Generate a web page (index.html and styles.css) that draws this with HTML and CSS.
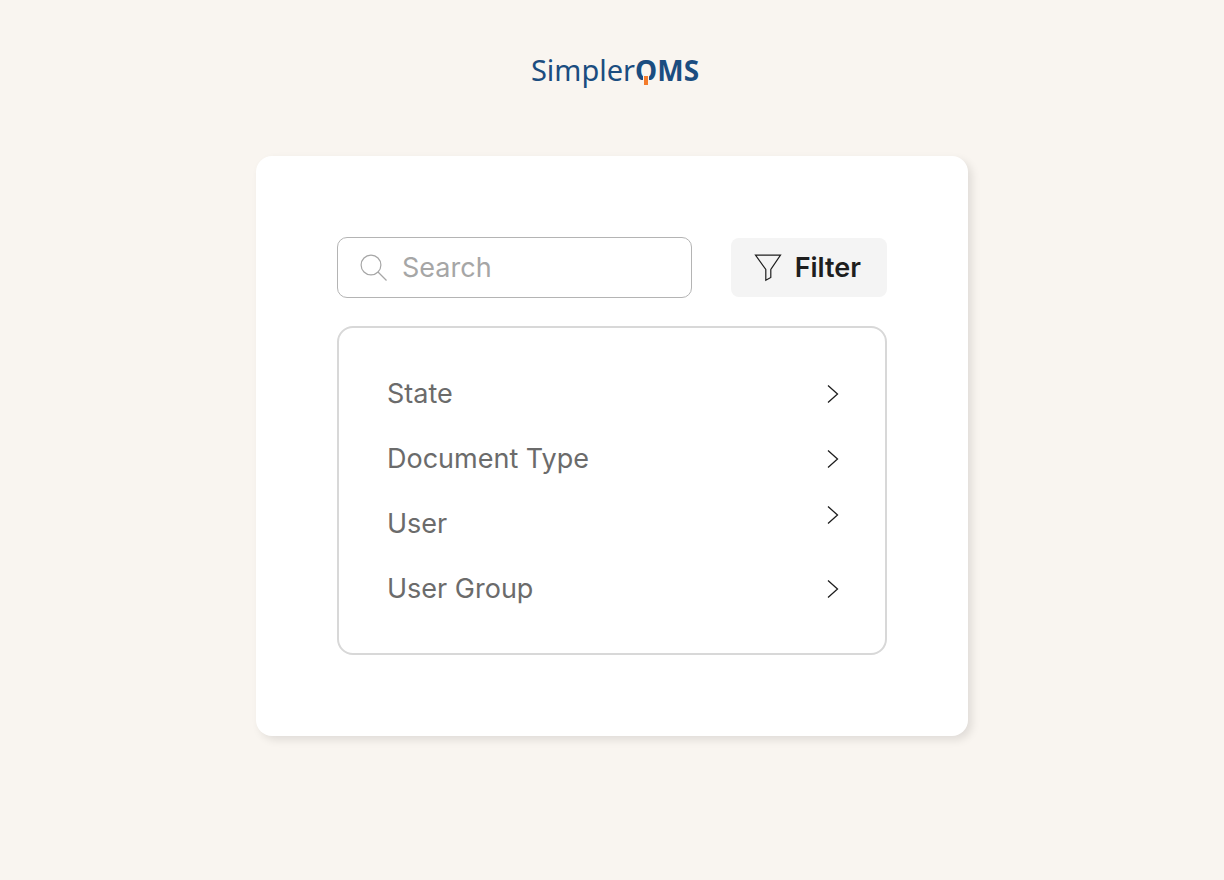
FILE: index.html
```html
<!DOCTYPE html>
<html lang="en">
<head>
	<meta charset="UTF-8">
	<meta name="viewport" content="width=device-width, initial-scale=1">
	<title>SimplerQMS</title>
	<link rel="stylesheet" href="styles.css">
</head>
<body>
	<header class="logo"><span class="simpler">Simpler</span><span class="qms"><span class="q"><span class="q-ring">Q</span></span>MS</span></header>
	<main class="card">
		<form class="toolbar">
			<label class="search">
				<svg class="search-icon" viewBox="0 0 28 28" aria-hidden="true">
					<circle cx="11" cy="11" r="9.9"/>
					<path d="M18 18L26.500 26.500"/>
				</svg>
				<input type="search" placeholder="Search" aria-label="Search">
			</label>
			<button type="button" class="filter">
				<svg class="filter-icon" viewBox="0 0 28 28" aria-hidden="true">
					<path d="M1.500 1.200H26.500L16.800 15.500V23.500L11.800 26.200V15.500Z"/>
				</svg>
				Filter
			</button>
		</form>
		<ul class="options">
			<li><button type="button">State<svg class="arrow" viewBox="0 0 12 18" aria-hidden="true"><path d="M1 0.500L10.500 9L1 17.500"/></svg></button></li>
			<li><button type="button">Document Type<svg class="arrow" viewBox="0 0 12 18" aria-hidden="true"><path d="M1 0.500L10.500 9L1 17.500"/></svg></button></li>
			<li><button type="button">User<svg class="arrow arrow-top" viewBox="0 0 12 18" aria-hidden="true"><path d="M1 0.500L10.500 9L1 17.500"/></svg></button></li>
			<li><button type="button">User Group<svg class="arrow" viewBox="0 0 12 18" aria-hidden="true"><path d="M1 0.500L10.500 9L1 17.500"/></svg></button></li>
		</ul>
	</main>
</body>
</html>
```
FILE: styles.css
```css
*{
	margin: 0;
	padding: 0;
	box-sizing: border-box;
	list-style: none;
}
body{
	background: #f9f5f0;
	font-family: Inter, "Liberation Sans", sans-serif;
	font-size: 27px;
	line-height: 36px;
	padding: 52px 24px;
}
button, input{
	font: inherit;
	border: none;
	background: none;
}
button{
	cursor: pointer;
}
svg{
	fill: none;
	flex: none;
}
/* logo */
.logo{
	display: flex;
	justify-content: center;
	align-items: baseline;
	height: 36px;
	padding-left: 6px;
	margin-bottom: 68px;
	color: #1b4d80;
	font-family: "Noto Sans", "Open Sans", sans-serif;
	font-size: 29px;
}
.qms{
	font-size: 28px;
	font-weight: 700;
}
.q{
	position: relative;
}
.q-ring{
	display: inline-block;
	clip-path: inset(0 0 8px 0);
}
.q::after{
	content: "";
	position: absolute;
	left: 8px;
	bottom: 4px;
	width: 4px;
	height: 9px;
	background: #f47b2a;
	border: solid #f9f5f0;
	border-width: 0 1px;
	background-clip: padding-box;
}
/* card */
.card{
	max-width: 712px;
	margin: 0 auto;
	padding: 81px;
	background: #fff;
	border-radius: 16px;
	box-shadow: 4px 4px 8px rgba(0,0,0,0.1);
}
.toolbar{
	display: flex;
	justify-content: space-between;
	gap: 24px;
	margin-bottom: 28px;
}
.search{
	display: flex;
	align-items: center;
	gap: 14px;
	width: 355px;
	height: 61px;
	padding: 0 22px;
	border: 1px solid #b4b4b4;
	border-radius: 10px;
}
.search input{
	min-width: 0;
	flex: 1;
	outline: none;
}
.search input::placeholder{
	color: #a6a6a6;
	opacity: 1;
}
.search-icon{
	width: 28px;
	height: 28px;
	stroke: #a6a6a6;
	stroke-width: 1.2;
}
.filter{
	display: flex;
	align-items: center;
	align-self: center;
	gap: 13px;
	height: 59px;
	padding: 0 26px 0 23px;
	background: #f4f4f4;
	border-radius: 8px;
	color: #1e1e1e;
	font-weight: 600;
}
.filter-icon{
	width: 28px;
	height: 28px;
	stroke: #1e1e1e;
	stroke-width: 1.2;
}
/* filter options */
.options{
	display: flex;
	flex-direction: column;
	gap: 29px;
	padding: 48px 46px 46px 48px;
	border: 2px solid #d8d8d8;
	border-radius: 16px;
}
.options button{
	display: flex;
	align-items: center;
	justify-content: space-between;
	width: 100%;
	color: #6b6b6b;
	text-align: left;
}
.arrow{
	width: 12px;
	height: 18px;
	stroke: #1e1e1e;
	stroke-width: 1.3;
}
.arrow-top{
	align-self: flex-start;
}
```
